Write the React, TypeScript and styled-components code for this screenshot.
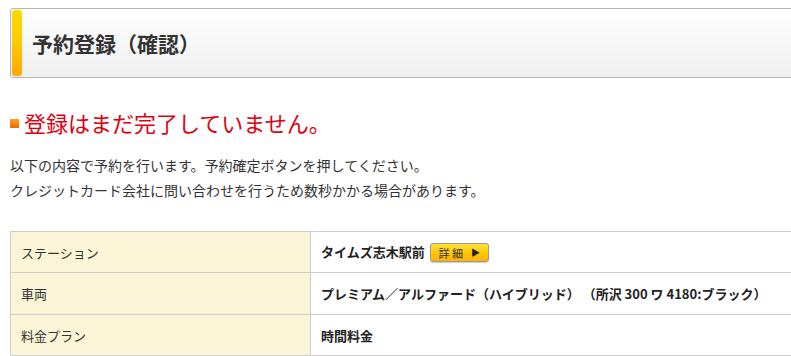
import styled, { createGlobalStyle } from "styled-components"

const GlobalStyle = createGlobalStyle`
  html, body {
    margin: 0;
    padding: 0;
    overflow: hidden;
    background: #fff;
  }
  body {
    font-family: "Noto Sans CJK JP", "Noto Sans", sans-serif;
    color: #333;
  }
`

const rows = [
  { label: "ステーション", value: "タイムズ志木駅前", detail: true },
  { label: "車両", value: "プレミアム／アルファード（ハイブリッド） （所沢 300 ワ 4180:ブラック）" },
  { label: "料金プラン", value: "時間料金" },
]

const App = () => {
  return (
    <Page>
      <GlobalStyle />
      <TitleBox>
        <TitleBar />
        <Title>予約登録（確認）</Title>
      </TitleBox>
      <Warning>
        <Bullet />
        登録はまだ完了していません。
      </Warning>
      <Lead>
        以下の内容で予約を行います。予約確定ボタンを押してください。
        <br />
        クレジットカード会社に問い合わせを行うため数秒かかる場合があります。
      </Lead>
      <InfoTable>
        <tbody>
          {rows.map((r) => (
            <tr key={r.label}>
              <Label>{r.label}</Label>
              <Value>
                {r.value}
                {r.detail && (
                  <DetailButton>
                    詳 細<Arrow>▶</Arrow>
                  </DetailButton>
                )}
              </Value>
            </tr>
          ))}
        </tbody>
      </InfoTable>
    </Page>
  )
}

export default App

const Page = styled.div`
  width: 900px;
  padding: 8px 0 0 10px;
`

const TitleBox = styled.div`
  display: flex;
  align-items: stretch;
  height: 66px;
  border: 1px solid #b4b4b4;
  border-radius: 3px;
  background: linear-gradient(#ffffff, #f0f0f0);
  padding: 1px;
`

const TitleBar = styled.div`
  width: 10px;
  border-radius: 3px;
  background: linear-gradient(#ffd800 0%, #ffcc00 45%, #ffa800 100%);
`

const Title = styled.h1`
  margin: 0 0 0 10px;
  font-size: 21px;
  font-weight: bold;
  color: #333;
  display: flex;
  align-items: center;
`

const Warning = styled.h2`
  margin: 29px 0 0 0;
  display: flex;
  align-items: center;
  font-size: 22px;
  font-weight: normal;
  color: #e00010;
  line-height: 30px;
`

const Bullet = styled.span`
  display: inline-block;
  width: 9px;
  height: 9px;
  margin: 3px 5px 0 0;
  background: linear-gradient(#ffa21f, #e86a00);
`

const Lead = styled.p`
  margin: 16px 0 0 0;
  font-size: 14px;
  line-height: 25px;
  color: #333;
`

const InfoTable = styled.table`
  margin-top: 28px;
  width: 100%;
  border-collapse: collapse;
  font-size: 13px;
  td {
    border: 1px solid #cccccc;
    height: 40px;
    padding: 0 10px;
    vertical-align: middle;
  }
  tr:nth-child(2) td {
    height: 41px;
  }
`

const Label = styled.td`
  width: 279px;
  background: #f9f5d6;
  color: #333;
`

const Value = styled.td`
  font-weight: bold;
  color: #222;
`

const DetailButton = styled.span`
  display: inline-flex;
  align-items: center;
  justify-content: center;
  margin-left: 5px;
  width: 57px;
  height: 17px;
  vertical-align: middle;
  border: 1px solid #9a9a9a;
  border-radius: 3px;
  background: linear-gradient(#ffe23a, #ffc400 60%, #ffb300);
  box-shadow: 0 1px 1px rgba(0, 0, 0, 0.2);
  font-size: 11px;
  font-weight: normal;
  color: #333;
`

const Arrow = styled.span`
  font-size: 9px;
  margin-left: 8px;
  color: #222;
`
